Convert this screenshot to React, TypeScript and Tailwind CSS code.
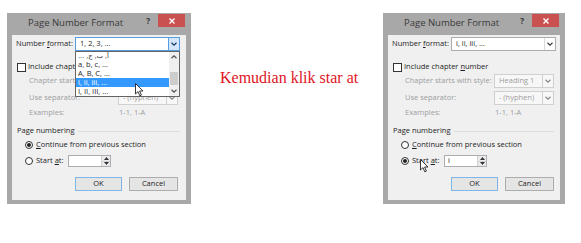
import React from 'react';

const ui = "font-['Open_Sans',sans-serif] text-[7.5px] leading-none";

function Chevron({ color = '#404040' }: { color?: string }) {
  return (
    <svg width="6" height="4" viewBox="0 0 6 4">
      <path d="M0.5 0.8 L3 3.2 L5.5 0.8" fill="none" stroke={color} strokeWidth="1.2" />
    </svg>
  );
}

function Select({
  value,
  width,
  disabled = false,
  open = false,
}: {
  value: string;
  width: string;
  disabled?: boolean;
  open?: boolean;
}) {
  return (
    <div
      className={`flex h-[14px] ${width} border ${
        open ? 'border-[#569de5] bg-white' : disabled ? 'border-[#d0d0d0] bg-[#f7f7f7]' : 'border-[#acacac] bg-white'
      }`}
    >
      <div className={`flex-1 flex items-center pl-[4px] ${disabled ? 'text-[#9d9d9d]' : 'text-[#1e1e1e]'}`}>
        {value}
      </div>
      <div
        className={`w-[11px] flex items-center justify-center border-l ${
          open ? 'bg-[#d4e7fa] border-[#569de5]' : disabled ? 'border-[#d0d0d0]' : 'border-[#d9d9d9]'
        }`}
      >
        <Chevron color={open ? '#1f3c66' : disabled ? '#8a8a8a' : '#404040'} />
      </div>
    </div>
  );
}

function Radio({ checked }: { checked: boolean }) {
  return (
    <div className="w-[8px] h-[8px] rounded-full border border-[#333] bg-white flex items-center justify-center">
      {checked && <div className="w-[4px] h-[4px] rounded-full bg-[#222]" />}
    </div>
  );
}

function Pointer() {
  return (
    <svg width="9" height="14" viewBox="0 0 9 14">
      <path
        d="M0.5 0.5 L0.5 11 L3 8.6 L4.8 12.8 L6.4 12.1 L4.6 8 L8 8 Z"
        fill="white"
        stroke="#222"
        strokeWidth="0.9"
        strokeLinejoin="round"
      />
    </svg>
  );
}

function ListItem({ children, selected = false }: { children: React.ReactNode; selected?: boolean }) {
  return (
    <div
      className={`h-[9px] flex items-center pl-[2px] ${selected ? 'bg-[#3399ff] text-white' : 'text-[#1e1e1e]'}`}
    >
      {children}
    </div>
  );
}

function Dialog({ variant }: { variant: 'left' | 'right' }) {
  const left = variant === 'left';
  return (
    <div className={`flex flex-col ${left ? 'w-[184px]' : 'w-[182px]'} h-[191px] bg-[#a8a8a8] ${ui}`}>
      <div className="h-[22px] flex items-start">
        <span className="ml-[21px] mt-[5px] text-[9.5px] text-[#3a3a3a]">Page Number Format</span>
        <div className="flex-1" />
        <span className="mt-[4px] mr-[8px] text-[8px] font-bold text-[#333]">?</span>
        <div className="mt-[1px] mr-[6px] w-[27px] h-[13px] bg-[#c9514f] flex items-center justify-center">
          <svg width="6" height="6" viewBox="0 0 6 6">
            <path d="M0.5 0.5 L5.5 5.5 M5.5 0.5 L0.5 5.5" stroke="white" strokeWidth="1.4" />
          </svg>
        </div>
      </div>
      <div className="flex-1 px-[5px] pb-[4px] flex">
        <div className="flex-1 bg-[#f0f0f0] relative flex flex-col pt-[2px] text-[#1e1e1e]">
          <div className="h-[14px] flex items-center">
            <span className="pl-[4px] w-[63px]">
              Number <u>f</u>ormat:
            </span>
            <Select value={left ? '1, 2, 3, ...' : 'i, ii, iii, ...'} width="w-[105px]" open={left} />
          </div>
          <div className="mt-[10px] h-[12px] flex items-center pl-[5px]">
            <div className="w-[9px] h-[9px] border border-[#333] bg-white" />
            <span className="ml-[2px]">
              Include chapter <u>n</u>umber
            </span>
          </div>
          <div className="mt-[1px] h-[14px] flex items-center text-[#9d9d9d]">
            <span className="pl-[17px] w-[106px]">Chapter starts with style:</span>
            <Select value="Heading 1" width="w-[60px]" disabled />
          </div>
          <div className="mt-[3px] h-[14px] flex items-center text-[#9d9d9d]">
            <span className="pl-[17px] w-[106px]">Use separator:</span>
            <Select value="-   (hyphen)" width="w-[60px]" disabled />
          </div>
          <div className="mt-[3px] h-[10px] flex items-center text-[#9d9d9d]">
            <span className="pl-[17px] w-[107px]">Examples:</span>
            <span>1-1, 1-A</span>
          </div>
          <div className="mt-[8px] h-[10px] flex items-center">
            <span className="pl-[5px]">Page numbering</span>
            <div className="flex-1 ml-[4px] mr-[6px] h-px bg-[#dcdcdc]" />
          </div>
          <div className="mt-[4px] h-[10px] flex items-center pl-[13px]">
            <Radio checked={left} />
            <span className="ml-[3px]">
              <u>C</u>ontinue from previous section
            </span>
          </div>
          <div className="mt-[5px] h-[12px] flex items-center pl-[13px]">
            <Radio checked={!left} />
            <span className="ml-[3px] w-[32px]">
              Start <u>a</u>t:
            </span>
            <div className="w-[43px] h-[12px] border border-[#abadb3] bg-white flex">
              <div className="flex-1 flex items-center pl-[3px] text-[#1e1e1e]">{left ? '' : 'i'}</div>
              <div className="w-[9px] flex flex-col border-l border-[#d0d0d0]">
                <div className="flex-1 flex items-center justify-center bg-[#ececec] border-b border-[#d0d0d0]">
                  <svg width="5" height="3" viewBox="0 0 5 3">
                    <path d="M0 3 L2.5 0 L5 3 Z" fill="#333" />
                  </svg>
                </div>
                <div className="flex-1 flex items-center justify-center bg-[#ececec]">
                  <svg width="5" height="3" viewBox="0 0 5 3">
                    <path d="M0 0 L2.5 3 L5 0 Z" fill="#333" />
                  </svg>
                </div>
              </div>
            </div>
          </div>
          <div className="mt-[10px] h-[14px] flex items-center pl-[63px]">
            <div className="w-[47px] h-[14px] border border-[#7fb6ea] bg-[#e5e5e5] flex items-center justify-center">
              OK
            </div>
            <div className="ml-[7px] w-[49px] h-[14px] border border-[#adadad] bg-[#e5e5e5] flex items-center justify-center">
              Cancel
            </div>
          </div>

          {left && (
            <div className="absolute left-[63px] top-[16px] w-[105px] h-[46px] bg-white border border-[#646464] flex">
              <div className="flex-1 flex flex-col overflow-hidden">
                <ListItem>
                  <span dir="rtl" className="inline-block font-['DejaVu_Sans',sans-serif] text-[6.5px]">
                    أ, ب, ج, ...
                  </span>
                </ListItem>
                <ListItem>a, b, c, ...</ListItem>
                <ListItem>A, B, C, ...</ListItem>
                <ListItem selected>i, ii, iii, ...</ListItem>
                <ListItem>I, II, III, ...</ListItem>
              </div>
              <div className="w-[10px] bg-[#f0f0f0] flex flex-col items-center">
                <div className="h-[10px] flex items-center justify-center rotate-180">
                  <Chevron color="#555" />
                </div>
                <div className="mt-[10px] w-[8px] h-[13px] bg-[#cdcdcd]" />
                <div className="flex-1" />
                <div className="h-[10px] flex items-center justify-center">
                  <Chevron color="#555" />
                </div>
              </div>
            </div>
          )}

          <div className={`absolute ${left ? 'left-[123px] top-[48px]' : 'left-[32px] top-[124px]'}`}>
            <Pointer />
          </div>
        </div>
      </div>
    </div>
  );
}

export default function App() {
  return (
    <div className="w-[581px] h-[243px] bg-white flex items-start pt-[13px] pl-[7px] overflow-hidden">
      <Dialog variant="left" />
      <div className="w-[192px] pl-[29px] pt-[52px]">
        <span className="font-['Liberation_Serif',serif] text-[16px] leading-none text-[#e0141e]">
          Kemudian klik star at
        </span>
      </div>
      <Dialog variant="right" />
    </div>
  );
}
